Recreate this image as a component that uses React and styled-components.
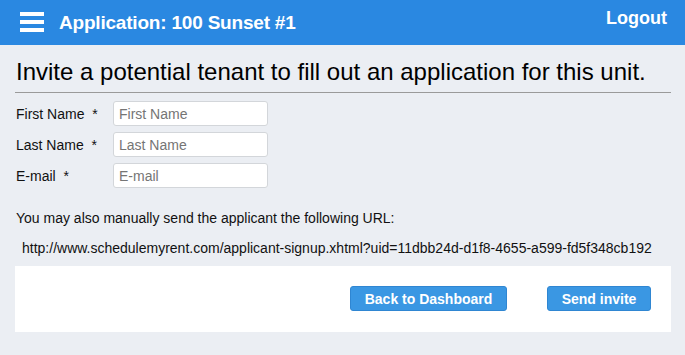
import React from "react";
import styled, { createGlobalStyle } from "styled-components";

const Global = createGlobalStyle`
  html, body { margin: 0; padding: 0; background: #ebeef3; }
  body { font-family: "Liberation Sans", Arial, sans-serif; color: #111; }
  * { box-sizing: border-box; }
`;

const Page = styled.div`
  width: 685px;
  height: 355px;
  background: #ebeef3;
  overflow: hidden;
`;

const Header = styled.header`
  height: 45px;
  background: #2a88e1;
  display: flex;
  align-items: flex-start;
  padding: 0 18px 0 20px;
  color: #fff;
`;

const Burger = styled.button`
  width: 24px;
  height: 20px;
  margin-top: 12px;
  padding: 0;
  border: 0;
  background: transparent;
  display: flex;
  flex-direction: column;
  justify-content: space-between;
  cursor: pointer;
  & > span {
    display: block;
    height: 4px;
    background: #fff;
  }
`;

const Title = styled.h1`
  margin: 12px 0 0 15px;
  font-size: 19px;
  font-weight: bold;
  letter-spacing: -0.2px;
  line-height: 22px;
  flex: 1;
`;

const Logout = styled.a`
  margin-top: 8px;
  font-size: 18px;
  font-weight: bold;
  line-height: 20px;
  color: #fff;
  text-decoration: none;
`;

const Main = styled.main`
  padding: 0 14px 0 15px;
`;

const Heading = styled.h2`
  margin: 0;
  padding: 13px 0 6px 1px;
  font-size: 24px;
  font-weight: normal;
  line-height: 28px;
  color: #000;
  border-bottom: 1px solid #9a9a9a;
`;

const Form = styled.div`
  display: grid;
  grid-template-columns: 98px 155px;
  row-gap: 6px;
  margin-top: 8px;
  align-items: center;
`;

const Label = styled.label`
  padding-left: 1px;
  font-size: 14px;
  color: #111;
  white-space: pre;
`;

const Input = styled.input`
  height: 25px;
  width: 155px;
  border: 1px solid #d3d6da;
  border-radius: 3px;
  background: #fff;
  padding: 0 5px;
  font-family: "Liberation Sans", Arial, sans-serif;
  font-size: 14px;
  color: #333;
  &::placeholder { color: #757575; }
`;

const Note = styled.p`
  margin: 22px 0 0 1px;
  font-size: 14px;
  line-height: 16px;
  color: #111;
`;

const Url = styled.p`
  margin: 14px 0 0 7px;
  font-size: 14px;
  line-height: 16px;
  color: #111;
`;

const Panel = styled.div`
  margin-top: 10px;
  height: 66px;
  background: #fff;
  display: flex;
  justify-content: flex-end;
  align-items: flex-start;
  gap: 40px;
  padding: 20px 20px 0 0;
`;

const Button = styled.button`
  height: 25px;
  width: ${(p) => p.w}px;
  border: 1px solid #2f86d2;
  border-radius: 3px;
  background: #3a97e3;
  color: #fff;
  font-family: "Liberation Sans", Arial, sans-serif;
  font-size: 14px;
  font-weight: bold;
  cursor: pointer;
  padding: 0;
`;

export default function App() {
  return (
    <Page>
      <Global />
      <Header>
        <Burger aria-label="Menu">
          <span />
          <span />
          <span />
        </Burger>
        <Title>Application: 100 Sunset #1</Title>
        <Logout href="#">Logout</Logout>
      </Header>
      <Main>
        <Heading>Invite a potential tenant to fill out an application for this unit.</Heading>
        <Form>
          <Label>First Name  *</Label>
          <Input placeholder="First Name" />
          <Label>Last Name  *</Label>
          <Input placeholder="Last Name" />
          <Label>E-mail  *</Label>
          <Input placeholder="E-mail" />
        </Form>
        <Note>You may also manually send the applicant the following URL:</Note>
        <Url>http://www.schedulemyrent.com/applicant-signup.xhtml?uid=11dbb24d-d1f8-4655-a599-fd5f348cb192</Url>
        <Panel>
          <Button w={157}>Back to Dashboard</Button>
          <Button w={104}>Send invite</Button>
        </Panel>
      </Main>
    </Page>
  );
}
